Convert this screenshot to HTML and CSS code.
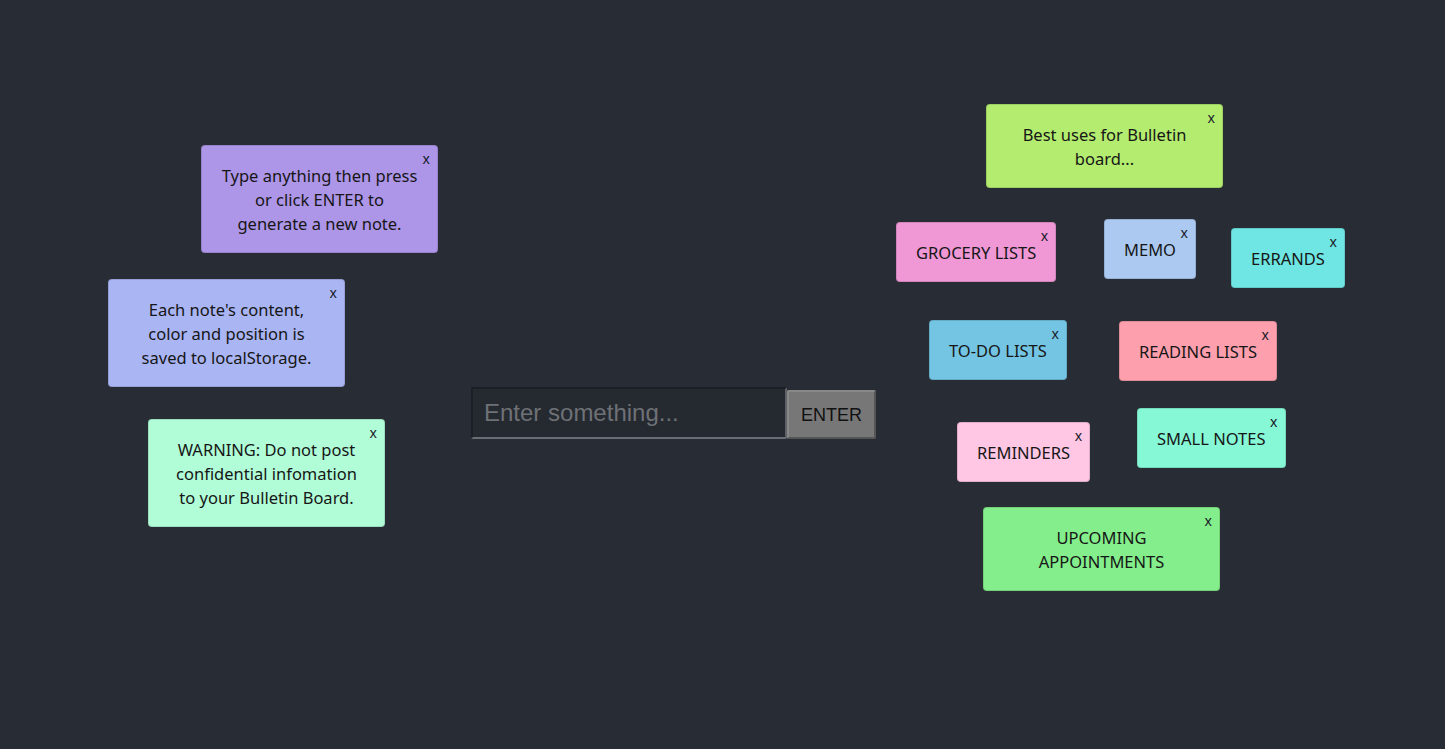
FILE: index.html
```html
<!DOCTYPE html>
<html>
<head>
<meta charset="utf-8">
<link rel="stylesheet" href="styles.css">
</head>
<body>
<main class="board">
  <form class="entry">
    <input class="entry-input" type="text" placeholder="Enter something...">
    <button class="entry-btn" type="button">ENTER</button>
  </form>

  <div class="note wide c-purple" style="left:201px;top:145px">Type anything then press<br>or click ENTER to<br>generate a new note.<span class="close">x</span></div>
  <div class="note wide c-peri" style="left:108px;top:279px">Each note's content,<br>color and position is<br>saved to localStorage.<span class="close">x</span></div>
  <div class="note wide c-mint" style="left:148px;top:419px">WARNING: Do not post<br>confidential infomation<br>to your Bulletin Board.<span class="close">x</span></div>

  <div class="note wide c-lime" style="left:986px;top:104px">Best uses for Bulletin<br>board...<span class="close">x</span></div>
  <div class="note c-pink" style="left:896px;top:222px">GROCERY LISTS<span class="close">x</span></div>
  <div class="note c-sky" style="left:1104px;top:219px">MEMO<span class="close">x</span></div>
  <div class="note c-cyan" style="left:1231px;top:228px">ERRANDS<span class="close">x</span></div>
  <div class="note c-blue" style="left:929px;top:320px">TO-DO LISTS<span class="close">x</span></div>
  <div class="note c-rose" style="left:1119px;top:321px">READING LISTS<span class="close">x</span></div>
  <div class="note c-blush" style="left:957px;top:422px">REMINDERS<span class="close">x</span></div>
  <div class="note c-aqua" style="left:1137px;top:408px">SMALL NOTES<span class="close">x</span></div>
  <div class="note wide c-green" style="left:983px;top:507px">UPCOMING<br>APPOINTMENTS<span class="close">x</span></div>
</main>
</body>
</html>
```
FILE: styles.css
```css
html, body {
  margin: 0;
  padding: 0;
  background: #282c34;
}

.board {
  position: relative;
  width: 1445px;
  height: 749px;
  overflow: hidden;
  font-family: "Noto Sans", "Open Sans", sans-serif;
}

.entry {
  display: flex;
  align-items: flex-end;
  padding: 387px 0 0 471px;
  margin: 0;
}

.entry-input {
  box-sizing: border-box;
  width: 316px;
  height: 52px;
  margin: 0;
  padding: 0 11px;
  background: #252930;
  border-style: solid;
  border-width: 2px;
  border-color: #1c1f25 #5e6168 #6a6d73 #1c1f25;
  border-radius: 2px;
  color: #ddd;
  font-family: "Liberation Sans", Arial, sans-serif;
  font-size: 24px;
  outline: none;
}

.entry-input::placeholder {
  color: #6e7176;
}

.entry-btn {
  box-sizing: border-box;
  width: 89px;
  height: 49px;
  margin: 0;
  padding: 2px 0 0;
  background: #777777;
  border-style: solid;
  border-width: 2px;
  border-color: #888 #555 #555 #888;
  border-radius: 2px;
  color: #111;
  font-family: "Liberation Sans", Arial, sans-serif;
  font-size: 18px;
}

.note {
  position: absolute;
  box-sizing: border-box;
  padding: 18px 19px 16px;
  border-radius: 4px;
  border: 1px solid rgba(0, 0, 0, 0.12);
  color: #161616;
  font-size: 16.5px;
  line-height: 24px;
  text-align: center;
  white-space: nowrap;
}

.note.wide {
  width: 237px;
  padding-left: 4px;
  padding-right: 4px;
}

.close {
  position: absolute;
  top: 5px;
  right: 7px;
  font-size: 14px;
  line-height: 16px;
  color: #1a1a2a;
}

.c-purple { background: #ad95e8; }
.c-peri   { background: #aab5f4; }
.c-mint   { background: #b1fdd8; }
.c-lime   { background: #b4ec70; }
.c-pink   { background: #ef98d5; }
.c-sky    { background: #abc9f1; }
.c-cyan   { background: #6fe6e3; }
.c-blue   { background: #74c5e3; }
.c-rose   { background: #fd9fad; }
.c-blush  { background: #ffc7e4; }
.c-aqua   { background: #86f8d6; }
.c-green  { background: #83ee8b; }
```
